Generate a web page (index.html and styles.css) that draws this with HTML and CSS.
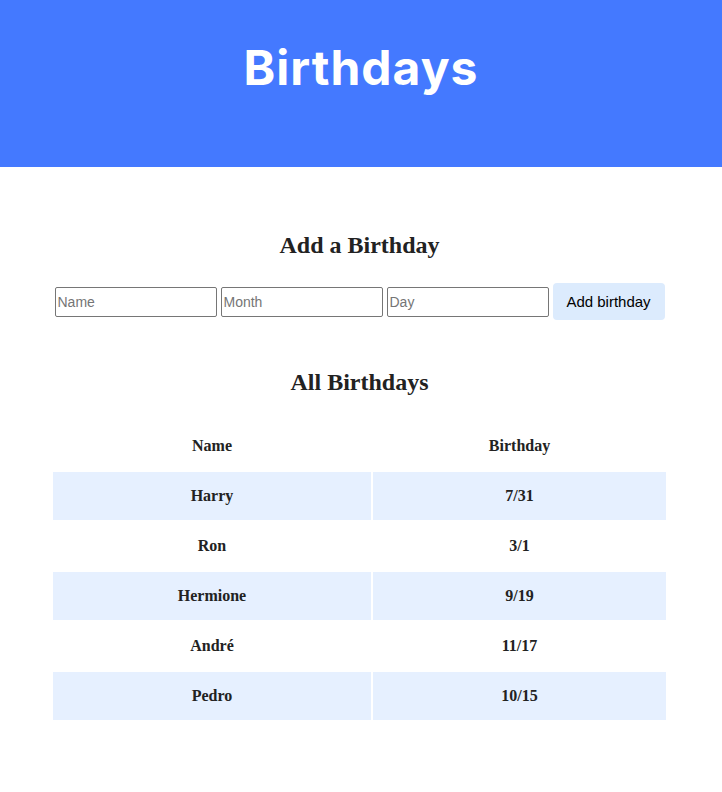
FILE: index.html
```html
<!DOCTYPE html>
<html lang="en">
<head>
<meta charset="utf-8">
<title>Birthdays</title>
<link rel="stylesheet" href="styles.css">
</head>
<body>
<header class="banner">
  <h1 class="banner-title">Birthdays</h1>
</header>
<main class="content">
  <h2 class="section-title">Add a Birthday</h2>
  <form class="add-form">
    <input class="field" type="text" placeholder="Name">
    <input class="field" type="text" placeholder="Month">
    <input class="field" type="text" placeholder="Day">
    <button class="add-btn" type="button">Add birthday</button>
  </form>
  <h2 class="section-title section-title--list">All Birthdays</h2>
  <table class="bday-table">
    <thead>
      <tr><th class="col-name">Name</th><th class="col-date">Birthday</th></tr>
    </thead>
    <tbody>
      <tr class="row-alt"><td>Harry</td><td>7/31</td></tr>
      <tr><td>Ron</td><td>3/1</td></tr>
      <tr class="row-alt"><td>Hermione</td><td>9/19</td></tr>
      <tr><td>André</td><td>11/17</td></tr>
      <tr class="row-alt"><td>Pedro</td><td>10/15</td></tr>
    </tbody>
  </table>
</main>
</body>
</html>
```
FILE: styles.css
```css
html, body {
  margin: 0;
  padding: 0;
  background: #ffffff;
}

body {
  font-family: "Liberation Serif", "Times New Roman", serif;
  color: #222222;
}

.banner {
  background: #4479ff;
  height: 167px;
  box-sizing: border-box;
  padding-top: 36px;
}

.banner-title {
  margin: 0;
  text-align: center;
  color: #ffffff;
  font-family: Inter, "Open Sans", sans-serif;
  font-weight: 700;
  font-size: 48px;
  line-height: 64px;
  letter-spacing: 1px;
}

.content {
  width: 617px;
  margin: 0 auto;
  padding: 44px 3px 0 0;
}

.section-title {
  margin: 20px 0 0;
  text-align: center;
  font-size: 24px;
  line-height: 28px;
  font-weight: bold;
}

.add-form {
  margin-top: 24px;
  display: flex;
  align-items: center;
  justify-content: center;
  gap: 4px;
}

.field {
  width: 162px;
  height: 30px;
  box-sizing: border-box;
  border: 1px solid #767676;
  border-radius: 2px;
  padding: 0 2px;
  font-family: "Liberation Sans", Arial, sans-serif;
  font-size: 14px;
  color: #000;
  background: #fff;
}

.field::placeholder {
  color: #757575;
}

.add-btn {
  width: 112px;
  height: 37px;
  border: none;
  border-radius: 4px;
  background: #dcebfd;
  color: #000;
  font-family: "Liberation Sans", Arial, sans-serif;
  font-size: 15px;
  padding: 0 12px;
  cursor: pointer;
}

.section-title--list {
  margin-top: 48px;
}

.bday-table {
  width: 100%;
  margin-top: 24px;
  border-collapse: separate;
  border-spacing: 2px;
  font-size: 16px;
}

.bday-table th,
.bday-table td {
  padding: 15px;
  line-height: 18px;
  text-align: center;
  font-weight: bold;
}

.col-name {
  width: 288px;
}

.row-alt td {
  background: #e6f0ff;
}
```
